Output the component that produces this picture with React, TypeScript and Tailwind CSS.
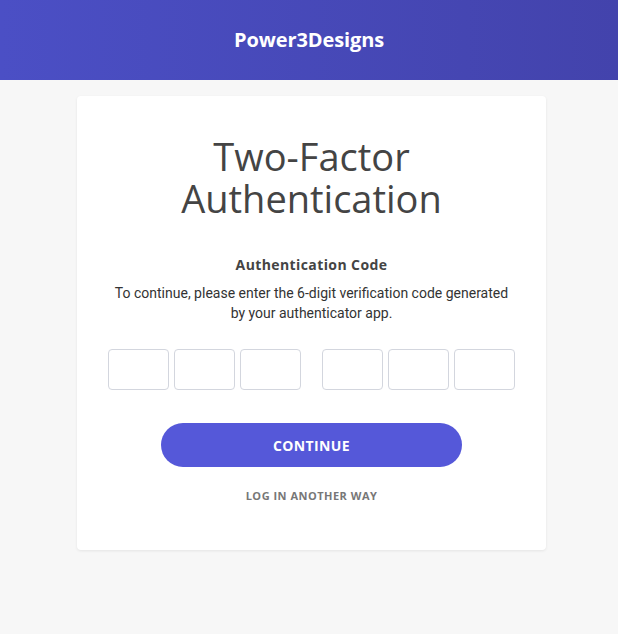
import React from 'react';

const heading = { fontFamily: '"Open Sans", "Noto Sans", sans-serif' };
const body = { fontFamily: 'Roboto, "Liberation Sans", sans-serif' };

const CodeBox = () => (
  <input
    type="text"
    maxLength={1}
    className="w-[61px] h-[41px] rounded-[4px] border border-[#d3d6de] bg-white text-center text-lg outline-none"
  />
);

export default function App() {
  return (
    <div className="min-h-[634px] bg-[#f7f7f7]" style={body}>
      {/* header */}
      <header className="h-[80px] flex items-center justify-center bg-gradient-to-r from-[#4b4fc5] to-[#4343ac]">
        <span className="text-white text-[20px] font-bold tracking-[-0.1px]" style={heading}>
          Power3Designs
        </span>
      </header>

      {/* card */}
      <div className="pt-4 pl-[77px]">
        <div className="w-[469px] h-[454px] bg-white rounded-[4px] shadow-[0_1px_3px_rgba(0,0,0,0.08)] flex flex-col items-center pt-[39px]">
          <h1
            className="text-[#444] text-[38px] leading-[42px] font-normal text-center"
            style={heading}
          >
            Two-Factor
            <br />
            Authentication
          </h1>

          <h2 className="mt-[35px] text-[#444] text-[14px] font-bold tracking-[0.4px]" style={heading}>
            Authentication Code
          </h2>
          <p className="mt-[8px] text-[#333] text-[14px] leading-[20px] text-center w-[400px]">
            To continue, please enter the 6-digit verification code generated by your authenticator app.
          </p>

          <div className="mt-[26px] flex gap-[21px]">
            <div className="flex gap-[5px]">
              <CodeBox />
              <CodeBox />
              <CodeBox />
            </div>
            <div className="flex gap-[5px]">
              <CodeBox />
              <CodeBox />
              <CodeBox />
            </div>
          </div>

          <button
            className="mt-[33px] w-[301px] h-[44px] rounded-full bg-[#5558d9] text-white text-[14px] font-bold tracking-[0.4px]"
            style={heading}
          >
            CONTINUE
          </button>

          <a className="mt-[21px] text-[#777] text-[11px] font-bold tracking-[0.5px] cursor-pointer" style={heading}>
            LOG IN ANOTHER WAY
          </a>
        </div>
      </div>
    </div>
  );
}
